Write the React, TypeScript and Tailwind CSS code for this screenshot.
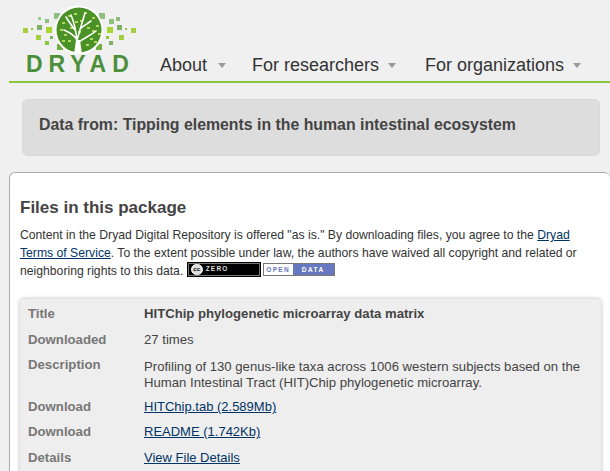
import React from 'react'

const font = { fontFamily: '"Liberation Sans", Arial, sans-serif' }

const squares: [number, number, number, string][] = [
  [23, 28, 5, '#a4cf3f'], [31, 28, 2, '#8cc63f'], [37, 25, 5, '#7fb069'], [38, 17, 3, '#9cc88c'],
  [45, 19, 4, '#8fbf7f'], [46, 27, 6, '#a8d42f'], [36, 35, 5, '#a4cf3f'], [50, 36, 3, '#7fb069'],
  [45, 41, 4, '#8cc63f'], [54, 13, 6, '#8fbf7f'], [57, 44, 6, '#6fae3f'], [96, 44, 6, '#6fae3f'],
  [99, 13, 6, '#8fbf7f'], [109, 19, 5, '#8fbf7f'], [116, 17, 4, '#8fbf7f'], [107, 27, 6, '#a8d42f'],
  [117, 25, 5, '#7fb069'], [125, 28, 2, '#8cc63f'], [131, 28, 5, '#a4cf3f'], [106, 36, 3, '#8cc63f'],
  [109, 41, 4, '#7fb069'], [119, 35, 5, '#a4cf3f'],
]

const leaves: [number, number][] = [
  [62, 22], [68, 15], [74, 13], [84, 12], [92, 17], [96, 25], [98, 33], [90, 38], [64, 34], [60, 29],
  [70, 27], [80, 20], [87, 27], [75, 21], [92, 30], [68, 40], [86, 44], [94, 41], [62, 40], [78, 31],
]

function Logo() {
  return (
    <div className="w-[160px] shrink-0 flex flex-col">
      <svg width="150" height="54" viewBox="0 0 150 54" className="block">
        {squares.map(([x, y, s, c], i) => (
          <rect key={i} x={x} y={y} width={s} height={s} fill={c} />
        ))}
        <circle cx="79" cy="30" r="24.5" fill="#fff" />
        <circle cx="79" cy="30" r="22.5" fill="#4a9127" />
        {leaves.map(([x, y], i) => (
          <rect key={i} x={x} y={y} width="3" height="2" fill="#b5d95a" />
        ))}
        <path
          d="M76 54 L77 40 C75 36 71 33 64 30 M77 40 C76 32 75 24 71 15 M77 40 C79 34 81 26 85 13 M79 42 C84 38 90 36 96 31 M75 30 C72 26 69 22 66 17 M80 29 C83 26 87 24 91 21"
          fill="none"
          stroke="#fff"
          strokeWidth="1.6"
          strokeLinecap="round"
        />
        <path d="M74 54 L76 40 L80 40 L82 54 Z" fill="#fff" />
      </svg>
      <div className="h-[20px] pl-[26px] text-[23px] leading-[20px] font-bold text-[#4b8f3a] tracking-[6px]">DRYAD</div>
    </div>
  )
}

function NavItem({ label, gap, width }: { label: string; gap: string; width: string }) {
  return (
    <div className={`flex items-center shrink-0 ${width} ${gap}`}>
      <span className="text-[18px] leading-[22px] text-[#333]">{label}</span>
      <span className="w-0 h-0 mt-[1px] border-x-[4.5px] border-x-transparent border-t-[5px] border-t-[#999]" />
    </div>
  )
}

function Row({ label, top, children }: { label: string; top: string; children: React.ReactNode }) {
  return (
    <div className={`flex ${top}`}>
      <div className="w-[116px] shrink-0 text-[13.2px] leading-[16px] font-bold text-[#777]">{label}</div>
      <div className="text-[13.15px] leading-[16px] text-[#444]">{children}</div>
    </div>
  )
}

function FileLink({ children }: { children: React.ReactNode }) {
  return <a className="text-[13px] text-[#003366] underline">{children}</a>
}

export default function App() {
  return (
    <div className="w-[610px] h-[471px] overflow-hidden bg-[#f0f0f0]" style={font}>
      <header className="h-[81px] flex">
        <Logo />
        <nav className="flex items-start pt-[54px]">
          <NavItem label="About" gap="gap-[11px]" width="w-[92px]" />
          <NavItem label="For researchers" gap="gap-[9px]" width="w-[173px]" />
          <NavItem label="For organizations" gap="gap-[9px]" width="w-[160px]" />
        </nav>
      </header>
      <div className="h-[2px] ml-[9px] bg-[#8cc63f]" />

      <div className="mt-[16px] ml-[22px] w-[578px] h-[57px] rounded-[6px] bg-[#dddddd] border border-[#d8d8d8] flex items-start pt-[14px] pl-[16px]">
        <h1 className="text-[15.85px] leading-[22px] font-bold text-[#444]">Data from: Tipping elements in the human intestinal ecosystem</h1>
      </div>

      <main className="mt-[16px] ml-[9px] h-[320px] bg-white border-l border-t border-[#aaa] rounded-tl-[6px] rounded-tr-[6px] pl-[10px] pr-[20px] pt-[25px]">
        <h2 className="text-[17px] leading-[20px] font-bold text-[#444]">Files in this package</h2>
        <div className="mt-[8px] h-[54px] text-[12.2px] leading-[18px] text-[#333]">
          <p>
            Content in the Dryad Digital Repository is offered "as is." By downloading files, you agree to the{' '}
            <a className="text-[#003366] underline">Dryad Terms of Service</a>. To the extent possible under law, the authors have waived all copyright and related or
            neighboring rights to this data.{' '}
            <span className="inline-flex align-[4px] ml-[1px] gap-[3px]">
              <span className="w-[72px] h-[13px] bg-black border border-[#777] outline outline-1 outline-black flex items-center gap-[3px] pl-[2px]">
                <span className="w-[12px] h-[11px] rounded-full bg-[#ddd] border border-white text-black text-[6px] leading-[9px] font-bold text-center">cc</span>
                <span className="text-[#ddd] text-[6.5px] leading-none tracking-[1.2px] font-bold">ZERO</span>
              </span>
              <span className="w-[72px] h-[13px] bg-white border border-[#777] flex items-stretch text-[6.5px] leading-[11px] tracking-[1.4px] font-bold">
                <span className="w-[29px] text-center text-[#6678bf]">OPEN</span>
                <span className="flex-1 bg-[#6678bf] text-white text-center">DATA</span>
              </span>
            </span>
          </p>
        </div>

        <section className="mt-[19px] w-[581px] h-[200px] bg-[#eeeeee] rounded-[4px] shadow-[0_0_4px_rgba(0,0,0,0.3)] pl-[8px] pr-[10px] pt-[7px]">
          <Row label="Title" top="">
            <span className="font-bold text-[#444]">HITChip phylogenetic microarray data matrix</span>
          </Row>
          <Row label="Downloaded" top="mt-[10px]">27 times</Row>
          <Row label="Description" top="mt-[9px]">
            <div className="mt-[2px]">
              Profiling of 130 genus-like taxa across 1006 western subjects based on the
              <br />
              Human Intestinal Tract (HIT)Chip phylogenetic microarray.
            </div>
          </Row>
          <Row label="Download" top="mt-[8px]">
            <FileLink>HITChip.tab (2.589Mb)</FileLink>
          </Row>
          <Row label="Download" top="mt-[9px]">
            <FileLink>README (1.742Kb)</FileLink>
          </Row>
          <Row label="Details" top="mt-[10px]">
            <FileLink>View File Details</FileLink>
          </Row>
        </section>
      </main>
    </div>
  )
}
